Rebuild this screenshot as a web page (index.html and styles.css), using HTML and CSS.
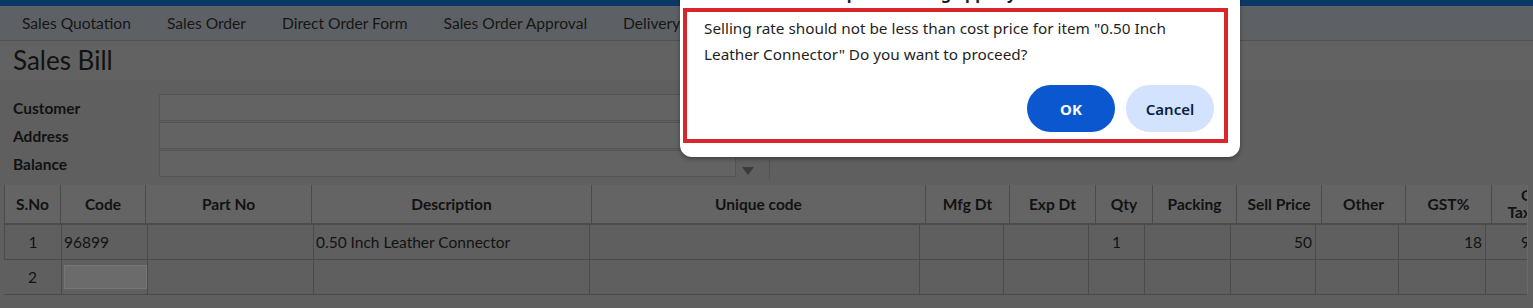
FILE: index.html
```html
<!DOCTYPE html>
<html lang="en">
<head>
  <meta charset="UTF-8">
  <title>Sales Bill</title>
  <link rel="stylesheet" href="styles.css">
</head>
<body>
  <div class="topbar"></div>
  <div class="nav">
    <span class="nav-item">Sales Quotation</span>
    <span class="nav-item">Sales Order</span>
    <span class="nav-item">Direct Order Form</span>
    <span class="nav-item">Sales Order Approval</span>
    <span class="nav-item">Delivery</span>
  </div>
  <div class="title-bar">Sales Bill</div>

  <div class="form">
    <div class="form-row">
      <label>Customer</label>
      <div class="field"></div>
    </div>
    <div class="form-row">
      <label>Address</label>
      <div class="field"></div>
    </div>
    <div class="form-row">
      <label>Balance</label>
      <div class="field"></div>
      <div class="arrow"></div>
      <div class="sep"></div>
    </div>
  </div>

  <div class="grid-wrap">
    <div class="grid-head">
      <div class="cell">S.No</div>
      <div class="cell">Code</div>
      <div class="cell">Part No</div>
      <div class="cell">Description</div>
      <div class="cell">Unique code</div>
      <div class="cell">Mfg Dt</div>
      <div class="cell">Exp Dt</div>
      <div class="cell">Qty</div>
      <div class="cell">Packing</div>
      <div class="cell">Sell Price</div>
      <div class="cell">Other</div>
      <div class="cell">GST%</div>
      <div class="cell two-line">GST<br>Tax Amt</div>
    </div>
    <div class="grid-body">
      <div class="cell center">1</div>
      <div class="cell left">96899</div>
      <div class="cell"></div>
      <div class="cell left">0.50 Inch Leather Connector</div>
      <div class="cell"></div>
      <div class="cell"></div>
      <div class="cell"></div>
      <div class="cell center">1</div>
      <div class="cell"></div>
      <div class="cell right">50</div>
      <div class="cell"></div>
      <div class="cell right">18</div>
      <div class="cell tax">9.00</div>

      <div class="cell center">2</div>
      <div class="cell"><div class="cell-input"></div></div>
      <div class="cell"></div>
      <div class="cell"></div>
      <div class="cell"></div>
      <div class="cell"></div>
      <div class="cell"></div>
      <div class="cell"></div>
      <div class="cell"></div>
      <div class="cell"></div>
      <div class="cell"></div>
      <div class="cell"></div>
      <div class="cell"></div>
    </div>
  </div>

  <div class="dialog">
    <div class="dialog-title">erp.salesbilling.app says</div>
    <div class="dialog-box">
      <div class="dialog-msg">Selling rate should not be less than cost price for item "0.50 Inch Leather Connector" Do you want to proceed?</div>
      <div class="dialog-actions">
        <button class="btn btn-ok">OK</button>
        <button class="btn btn-cancel">Cancel</button>
      </div>
    </div>
  </div>
</body>
</html>
```

FILE: styles.css
```css
body {
  margin: 0;
  width: 1533px;
  height: 308px;
  overflow: hidden;
  position: relative;
  background-color: #5f5f5f;
  font-family: Lato, 'Open Sans', sans-serif;
  color: #121212;
}

.topbar {
  height: 6px;
  background-color: #0a3968;
}

.nav {
  display: flex;
  height: 34px;
  padding-left: 4px;
  background-color: #5d6165;
  border-bottom: 1px solid #4f5357;
  white-space: nowrap;
}

.nav-item {
  padding: 0 18px;
  line-height: 34px;
  font-size: 15.6px;
  color: #161616;
}

.title-bar {
  height: 39px;
  line-height: 39px;
  padding-left: 13px;
  font-size: 26px;
  background-color: #626262;
}

.form {
  padding: 14px 0 0 13px;
  display: flex;
  flex-direction: column;
  gap: 1px;
}

.form-row {
  display: flex;
  align-items: center;
  height: 27px;
}

.form-row label {
  width: 146px;
  font-size: 15.5px;
  font-weight: bold;
}

.field {
  width: 575px;
  height: 25px;
  background-color: #636363;
  border: 1px solid #545454;
}

.arrow {
  width: 0;
  height: 0;
  margin: 14px 0 0 6px;
  border-left: 6px solid transparent;
  border-right: 6px solid transparent;
  border-top: 8px solid #3a3a3a;
}

.sep {
  width: 1px;
  height: 20px;
  margin: 12px 0 0 15px;
  background-color: #535353;
}

.grid-wrap {
  margin: 8px 0 0 4px;
  width: 1523px;
  overflow: hidden;
  border-right: 1px solid #6a6a6a;
}

.grid-head,
.grid-body {
  display: grid;
  width: 1580px;
}

.grid-head {
  grid-template-columns: 57px 85px 166px 280px 334px 84px 86px 57px 84px 85px 84px 86px 88px;
  grid-auto-rows: 38px;
  background-color: #646464;
  border-bottom: 2px solid #4c4c4c;
}

.grid-body {
  grid-template-columns: 58px 86px 166px 276px 330px 84px 85px 56px 86px 85px 83px 87px 90px;
  grid-auto-rows: 35px;
}

.cell {
  box-sizing: border-box;
  border-right: 1px solid #4b4b4b;
  display: flex;
  align-items: center;
  font-size: 15.5px;
  overflow: hidden;
  white-space: nowrap;
}

.grid-head .cell {
  justify-content: center;
  font-weight: bold;
}

.grid-head .two-line {
  text-align: center;
  line-height: 17px;
}

.grid-body .cell {
  border-bottom: 1px solid #4b4b4b;
}

.grid-body .cell:first-child,
.grid-head .cell:first-child {
  border-left: 1px solid #4b4b4b;
}

.center {
  justify-content: center;
}

.left {
  padding-left: 2px;
}

.right {
  justify-content: flex-end;
  padding-right: 3px;
}

.tax {
  padding-left: 35px;
}

.cell-input {
  width: 82px;
  height: 22px;
  margin-left: 2px;
  background-color: #6b6b6b;
  border: 1px solid #757575;
}

.dialog {
  position: absolute;
  left: 680px;
  top: -40px;
  width: 560px;
  height: 197px;
  background-color: #fff;
  border-radius: 12px;
  box-shadow: 0 2px 4px rgba(0, 0, 0, 0.35);
  font-family: 'Noto Sans', 'Open Sans', sans-serif;
  color: #1f1f1f;
}

.dialog-title {
  height: 48px;
  padding: 22px 0 0 150px;
  box-sizing: border-box;
  font-size: 16px;
  font-weight: bold;
}

.dialog-box {
  margin-left: 3px;
  width: 545px;
  height: 135px;
  box-sizing: border-box;
  border: 4px solid #d8262c;
  padding: 3px 10px 0 17px;
  display: flex;
  flex-direction: column;
}

.dialog-msg {
  width: 475px;
  font-size: 15.3px;
  line-height: 26px;
}

.dialog-actions {
  display: flex;
  justify-content: flex-end;
  gap: 11px;
  margin-top: auto;
  margin-bottom: 7px;
}

.btn {
  width: 88px;
  height: 47px;
  border: none;
  border-radius: 24px;
  font-family: 'Noto Sans', 'Open Sans', sans-serif;
  font-size: 15px;
  font-weight: bold;
}

.btn-ok {
  background-color: #0b57d0;
  color: #fff;
}

.btn-cancel {
  background-color: #d3e3fd;
  color: #0a1f44;
  font-weight: 600;
}
```
